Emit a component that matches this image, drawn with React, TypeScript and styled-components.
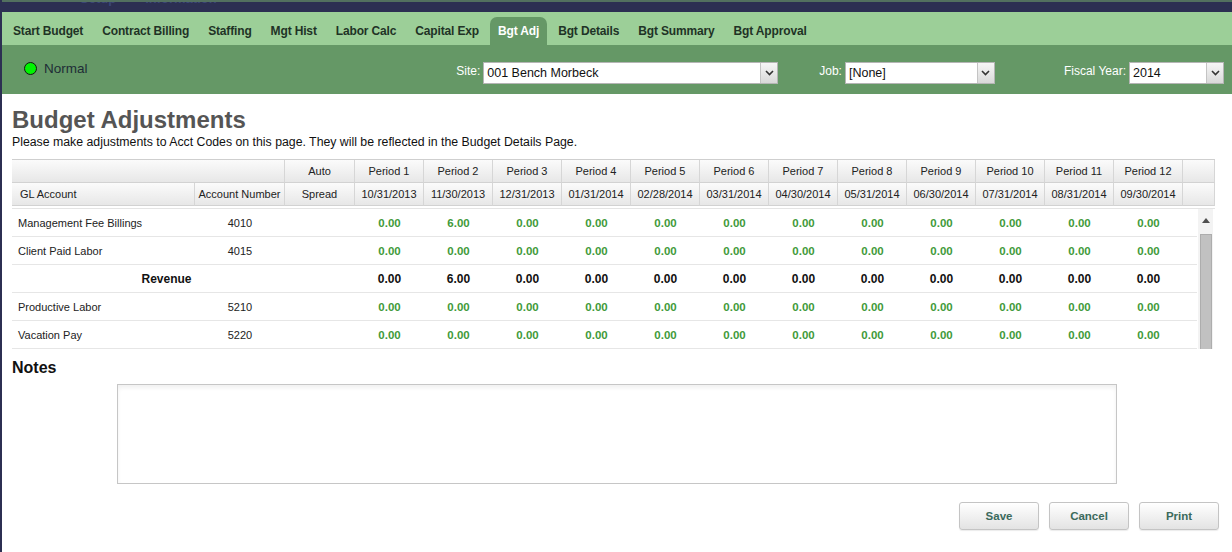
import React from "react";
import styled, { createGlobalStyle } from "styled-components";

const GlobalStyle = createGlobalStyle`
  html, body {
    margin: 0;
    padding: 0;
    background: #2c2f52;
    font-family: "Liberation Sans", Arial, sans-serif;
  }
  * { box-sizing: border-box; }
`;

const Page = styled.div`
  margin-left: 2px;
  min-height: 552px;
  background: #ffffff;
  display: flex;
  flex-direction: column;
`;

const TopBand = styled.div`
  height: 12px;
  background: #2c2f52;
  border-top: 2px solid #52705f;
  overflow: hidden;
  display: flex;
  gap: 29px;
  padding-left: 78px;
`;

const TopLink = styled.span`
  font-size: 13px;
  font-weight: bold;
  color: #3b4676;
  line-height: 14px;
  margin-top: -10px;
`;

const TabBar = styled.div`
  height: 33px;
  background: #9ccf98;
  display: flex;
  align-items: flex-end;
  gap: 3px;
  padding-left: 3px;
`;

const Tab = styled.div<{ $active?: boolean }>`
  height: 28px;
  line-height: 28px;
  padding: 0 8px;
  font-size: 12px;
  letter-spacing: -0.15px;
  font-weight: bold;
  color: ${(p) => (p.$active ? "#ffffff" : "#1f3326")};
  background: ${(p) => (p.$active ? "#659866" : "transparent")};
  border-radius: 7px 7px 0 0;
  white-space: nowrap;
`;

const Toolbar = styled.div`
  height: 49px;
  background: #659866;
  display: flex;
  align-items: flex-start;
  padding: 17px 8px 0 22px;
`;

const Status = styled.div`
  display: flex;
  align-items: center;
  gap: 7px;
  margin-top: -5px;
  height: 22px;
  font-size: 13.5px;
  color: #1e2d36;
  margin-right: auto;
`;

const Light = styled.span`
  width: 13px;
  height: 13px;
  border-radius: 50%;
  background: #00f400;
  border: 1.5px solid #0e1a0e;
`;

const Field = styled.div<{ $gapAfter: number }>`
  display: flex;
  align-items: flex-start;
  gap: 3px;
  margin-right: ${(p) => p.$gapAfter}px;
`;

const Label = styled.span`
  font-size: 12px;
  color: #ffffff;
  line-height: 19px;
`;

const SelectBox = styled.div<{ $w: number }>`
  width: ${(p) => p.$w}px;
  height: 22px;
  background: #ffffff;
  border: 1px solid #b5b5b5;
  display: flex;
  align-items: stretch;
`;

const SelectText = styled.span`
  flex: 1;
  font-size: 12.5px;
  line-height: 21px;
  padding-left: 3px;
  color: #111111;
  white-space: nowrap;
  overflow: hidden;
`;

const SelectButton = styled.span`
  width: 17px;
  background: linear-gradient(#f6f6f6, #d9d9d9);
  border-left: 1px solid #c4c4c4;
  display: flex;
  align-items: center;
  justify-content: center;
`;

const Content = styled.div`
  padding: 12px 12px 0 10px;
  display: flex;
  flex-direction: column;
`;

const Title = styled.h1`
  margin: 0;
  font-size: 24px;
  line-height: 28px;
  font-weight: bold;
  color: #555555;
`;

const Subtitle = styled.p`
  margin: 0;
  font-size: 12.3px;
  line-height: 16px;
  color: #111111;
`;

const GridCols = "183px 90px 70px repeat(12, 69px)";

const HeaderGrid = styled.div`
  margin-top: 9px;
  width: 1203px;
  display: grid;
  grid-template-columns: ${GridCols} 32px;
  grid-auto-rows: 23px;
  border-top: 1px solid #cfcfcf;
`;

const HeadCell = styled.div<{ $span?: number; $left?: boolean }>`
  grid-column: span ${(p) => p.$span ?? 1};
  background: linear-gradient(#fbfbfb, #e7e7e7);
  border-right: 1px solid #d6d6d6;
  border-bottom: 1px solid #d2d2d2;
  font-size: 11px;
  line-height: 23px;
  color: #222222;
  text-align: ${(p) => (p.$left ? "left" : "center")};
  padding-left: ${(p) => (p.$left ? "8px" : "0")};
  white-space: nowrap;
`;

const BodyWrap = styled.div`
  margin-top: 2px;
  width: 1203px;
  height: 141px;
  display: flex;
  border-top: 1px solid #e4e4e4;
  overflow: hidden;
`;

const Rows = styled.div`
  width: 1185px;
  display: flex;
  flex-direction: column;
`;

const Row = styled.div`
  height: 28px;
  display: grid;
  grid-template-columns: ${GridCols} 16px;
  align-items: center;
  border-bottom: 1px solid #e6e6e6;
  font-size: 11px;
  color: #222222;
`;

const NameCell = styled.div`
  padding-left: 6px;
  white-space: nowrap;
`;

const NumCell = styled.div`
  text-align: center;
`;

const GroupCell = styled.div`
  grid-column: span 2;
  text-align: center;
  padding-left: 36px;
  font-size: 12px;
  font-weight: bold;
  color: #111111;
`;

const Value = styled.div<{ $total?: boolean }>`
  text-align: center;
  font-weight: bold;
  font-size: ${(p) => (p.$total ? "12px" : "11.5px")};
  color: ${(p) => (p.$total ? "#111111" : "#3f9a3a")};
`;

const ScrollTrack = styled.div`
  width: 15px;
  margin-left: 1px;
  background: #f3f3f3;
  display: flex;
  flex-direction: column;
  align-items: center;
`;

const ScrollArrow = styled.div`
  height: 22px;
  width: 100%;
  display: flex;
  align-items: center;
  justify-content: center;
`;

const ScrollThumb = styled.div`
  width: 12px;
  flex: 1;
  background: #c1c1c1;
  border: 1px solid #adadad;
  border-bottom: none;
  margin-top: 3px;
`;

const NotesTitle = styled.h2`
  margin: 9px 0 0 0;
  font-size: 16px;
  line-height: 20px;
  font-weight: bold;
  color: #111111;
`;

const NotesArea = styled.div`
  margin: 6px 0 0 105px;
  width: 1000px;
  height: 100px;
  border: 1px solid #c6c6c6;
  background: #ffffff;
  box-shadow: inset 0 3px 4px rgba(0, 0, 0, 0.06);
`;

const ButtonRow = styled.div`
  margin-top: 18px;
  display: flex;
  justify-content: flex-end;
  gap: 10px;
  padding-right: 1px;
`;

const Button = styled.button`
  width: 80px;
  height: 28px;
  border: 1px solid #c4c4c4;
  border-radius: 3px;
  background: linear-gradient(#ffffff, #e3e3e3);
  font-family: "Liberation Sans", Arial, sans-serif;
  font-size: 11.5px;
  font-weight: bold;
  color: #3b6a5c;
  box-shadow: 0 1px 1px rgba(0, 0, 0, 0.08);
`;

const Chevron = () => (
  <svg width="9" height="6" viewBox="0 0 9 6">
    <path d="M1 1 L4.5 4.5 L8 1" fill="none" stroke="#333" strokeWidth="1.6" />
  </svg>
);

const UpArrow = () => (
  <svg width="8" height="5" viewBox="0 0 8 5">
    <path d="M0 5 L4 0 L8 5 Z" fill="#505050" />
  </svg>
);

const tabs = [
  "Start Budget",
  "Contract Billing",
  "Staffing",
  "Mgt Hist",
  "Labor Calc",
  "Capital Exp",
  "Bgt Adj",
  "Bgt Details",
  "Bgt Summary",
  "Bgt Approval",
];

const dates = [
  "10/31/2013",
  "11/30/2013",
  "12/31/2013",
  "01/31/2014",
  "02/28/2014",
  "03/31/2014",
  "04/30/2014",
  "05/31/2014",
  "06/30/2014",
  "07/31/2014",
  "08/31/2014",
  "09/30/2014",
];

type RowData =
  | { kind: "acct"; name: string; num: string; values: string[] }
  | { kind: "group"; name: string; values: string[] };

const zeros = (n: number) => Array.from({ length: n }, () => "0.00");
const withSix = () => {
  const v = zeros(12);
  v[1] = "6.00";
  return v;
};

const rows: RowData[] = [
  { kind: "acct", name: "Management Fee Billings", num: "4010", values: withSix() },
  { kind: "acct", name: "Client Paid Labor", num: "4015", values: zeros(12) },
  { kind: "group", name: "Revenue", values: withSix() },
  { kind: "acct", name: "Productive Labor", num: "5210", values: zeros(12) },
  { kind: "acct", name: "Vacation Pay", num: "5220", values: zeros(12) },
];

const Select = ({ w, value }: { w: number; value: string }) => (
  <SelectBox $w={w}>
    <SelectText>{value}</SelectText>
    <SelectButton>
      <Chevron />
    </SelectButton>
  </SelectBox>
);

export default function App() {
  return (
    <>
      <GlobalStyle />
      <Page>
        <TopBand>
          <TopLink>Setup</TopLink>
          <TopLink>Information</TopLink>
        </TopBand>
        <TabBar>
          {tabs.map((t) => (
            <Tab key={t} $active={t === "Bgt Adj"}>
              {t}
            </Tab>
          ))}
        </TabBar>
        <Toolbar>
          <Status>
            <Light />
            Normal
          </Status>
          <Field $gapAfter={41}>
            <Label>Site:</Label>
            <Select w={295} value="001 Bench Morbeck" />
          </Field>
          <Field $gapAfter={69}>
            <Label>Job:</Label>
            <Select w={150} value="[None]" />
          </Field>
          <Field $gapAfter={0}>
            <Label>Fiscal Year:</Label>
            <Select w={95} value="2014" />
          </Field>
        </Toolbar>
        <Content>
          <Title>Budget Adjustments</Title>
          <Subtitle>
            Please make adjustments to Acct Codes on this page. They will be reflected in the
            Budget Details Page.
          </Subtitle>
          <HeaderGrid>
            <HeadCell $span={2} />
            <HeadCell>Auto</HeadCell>
            {dates.map((_, i) => (
              <HeadCell key={"p" + i}>Period {i + 1}</HeadCell>
            ))}
            <HeadCell />
            <HeadCell $left>GL Account</HeadCell>
            <HeadCell>Account Number</HeadCell>
            <HeadCell>Spread</HeadCell>
            {dates.map((d) => (
              <HeadCell key={d}>{d}</HeadCell>
            ))}
            <HeadCell />
          </HeaderGrid>
          <BodyWrap>
            <Rows>
              {rows.map((r) =>
                r.kind === "acct" ? (
                  <Row key={r.name}>
                    <NameCell>{r.name}</NameCell>
                    <NumCell>{r.num}</NumCell>
                    <div />
                    {r.values.map((v, i) => (
                      <Value key={i}>{v}</Value>
                    ))}
                    <div />
                  </Row>
                ) : (
                  <Row key={r.name}>
                    <GroupCell>{r.name}</GroupCell>
                    <div />
                    {r.values.map((v, i) => (
                      <Value key={i} $total>
                        {v}
                      </Value>
                    ))}
                    <div />
                  </Row>
                )
              )}
            </Rows>
            <ScrollTrack>
              <ScrollArrow>
                <UpArrow />
              </ScrollArrow>
              <ScrollThumb />
            </ScrollTrack>
          </BodyWrap>
          <NotesTitle>Notes</NotesTitle>
          <NotesArea />
          <ButtonRow>
            <Button>Save</Button>
            <Button>Cancel</Button>
            <Button>Print</Button>
          </ButtonRow>
        </Content>
      </Page>
    </>
  );
}
